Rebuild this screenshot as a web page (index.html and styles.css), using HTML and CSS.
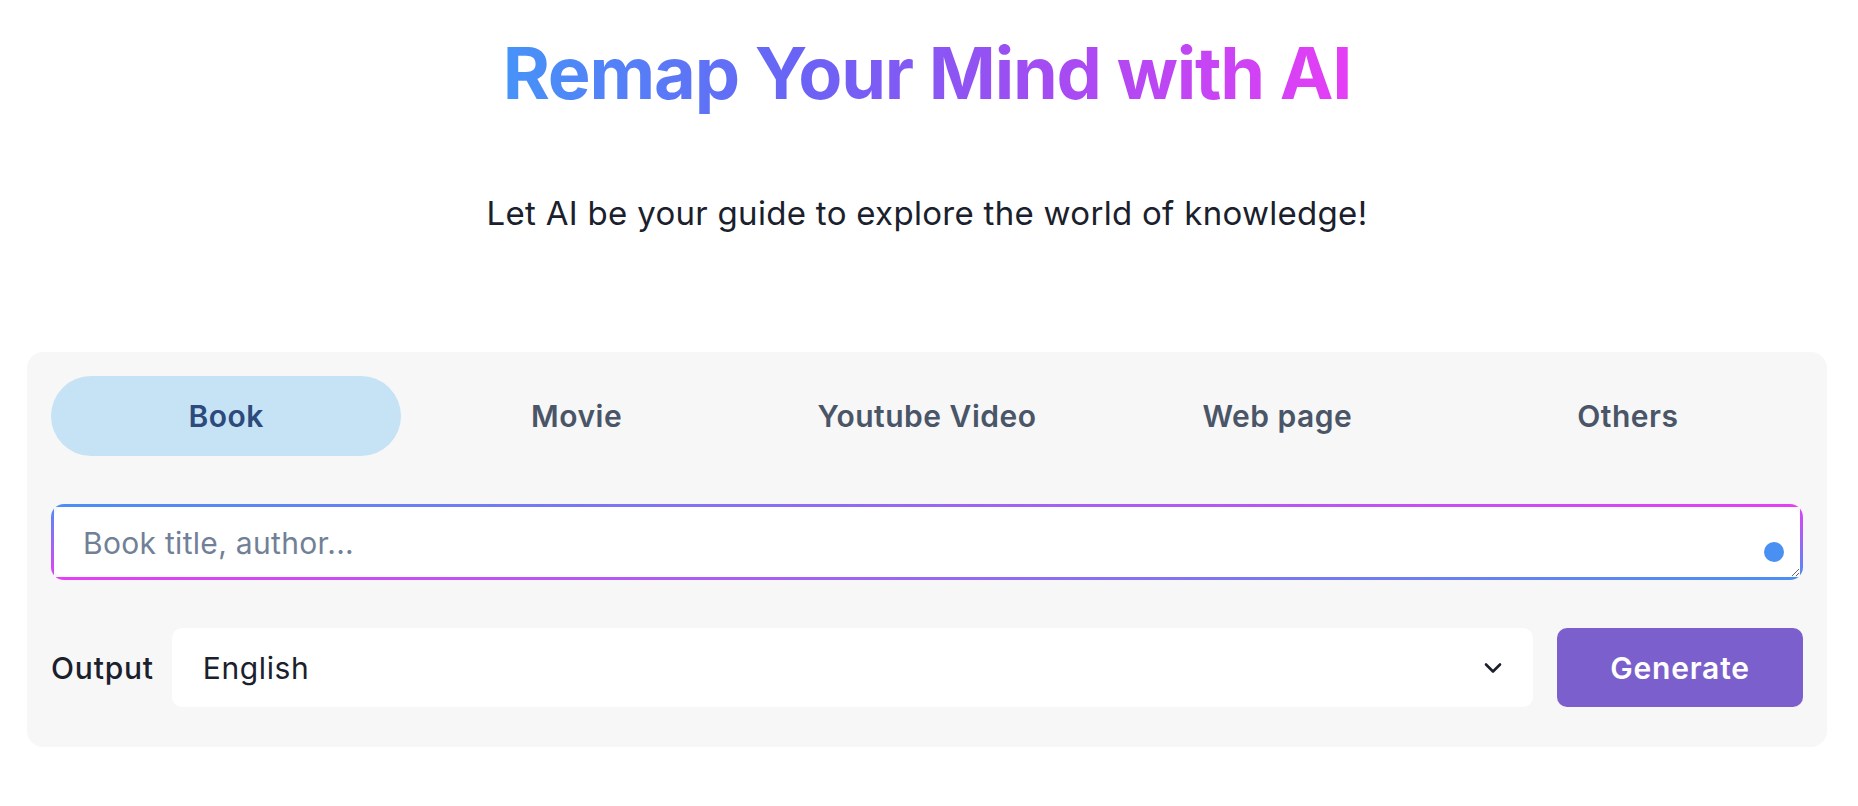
FILE: index.html
```html
<!DOCTYPE html>
<html lang="en">
<head>
<meta charset="utf-8">
<title>Remap Your Mind with AI</title>
<link rel="stylesheet" href="styles.css">
</head>
<body>
<main class="page">
  <header class="hero">
    <h1 class="title">Remap Your Mind with AI</h1>
    <p class="subtitle">Let AI be your guide to explore the world of knowledge!</p>
  </header>
  <section class="card">
    <nav class="tabs">
      <button class="tab active" type="button">Book</button>
      <button class="tab" type="button">Movie</button>
      <button class="tab" type="button">Youtube Video</button>
      <button class="tab" type="button">Web page</button>
      <button class="tab" type="button">Others</button>
    </nav>
    <div class="input-wrap">
      <textarea class="query" placeholder="Book title, author..."></textarea>
      <span class="dot"></span>
    </div>
    <div class="output-row">
      <label class="output-label" for="lang">Output</label>
      <div class="select-wrap">
        <select id="lang" class="select">
          <option>English</option>
        </select>
        <svg class="chevron" width="20" height="12" viewBox="0 0 20 12" aria-hidden="true"><path d="M3 2.5 L10 9.5 L17 2.5" fill="none" stroke="#1a202c" stroke-width="2.6" stroke-linecap="round" stroke-linejoin="round"/></svg>
      </div>
      <button class="generate" type="button">Generate</button>
    </div>
  </section>
</main>
</body>
</html>
```
FILE: styles.css
```css
* { box-sizing: border-box; }
html, body { margin: 0; padding: 0; background: #ffffff; }
body { font-family: Inter, "Noto Sans", "Liberation Sans", sans-serif; color: #1a202c; }

.page { padding: 30px 31px 0 27px; }

.hero { text-align: center; }
.title {
  margin: 0;
  font-size: 72px;
  line-height: 86px;
  font-weight: 700;
  letter-spacing: -1.2px;
  display: inline-block;
  background: linear-gradient(to right, #4693f8 0%, #6a63f5 35%, #a54bf2 65%, #e63ef6 100%);
  -webkit-background-clip: text;
  background-clip: text;
  color: transparent;
}
.subtitle {
  margin: 77px 0 0;
  font-size: 33px;
  line-height: 40px;
  font-weight: 400;
  letter-spacing: 0.3px;
  color: #1a202c;
}

.card {
  margin-top: 119px;
  background: #f7f7f7;
  border-radius: 16px;
  padding: 24px 24px 40px;
}

.tabs {
  display: grid;
  grid-template-columns: repeat(5, 1fr);
}
.tab {
  height: 80px;
  border: 0;
  border-radius: 40px;
  background: transparent;
  font-family: inherit;
  font-size: 30px;
  font-weight: 600;
  letter-spacing: 0.5px;
  color: #4a5568;
  cursor: pointer;
}
.tab.active { background: #c6e2f5; color: #2c4a7c; }

.input-wrap { position: relative; margin-top: 48px; }
.query {
  display: block;
  width: 100%;
  height: 76px;
  resize: vertical;
  border: 3px solid transparent;
  border-radius: 13px;
  padding: 18px 29px;
  font-family: inherit;
  font-size: 30px;
  line-height: 36px;
  letter-spacing: 0.3px;
  color: #1a202c;
  outline: none;
  overflow: hidden;
  background:
    linear-gradient(#ffffff, #ffffff) padding-box,
    linear-gradient(to right, #4a8ff6, #e63ef6) top / 100% 3px no-repeat border-box,
    linear-gradient(to left, #4a8ff6, #e63ef6) bottom / 100% 3px no-repeat border-box,
    linear-gradient(to bottom, #4a8ff6, #e63ef6) left / 3px 100% no-repeat border-box,
    linear-gradient(to top, #4a8ff6, #e63ef6) right / 3px 100% no-repeat border-box;
}
.query::placeholder { color: #718096; }
.dot {
  position: absolute;
  right: 19px;
  top: 38px;
  width: 20px;
  height: 20px;
  border-radius: 50%;
  background: #4a90f2;
}

.output-row {
  margin-top: 48px;
  display: flex;
  align-items: center;
  gap: 24px;
}
.output-label {
  font-size: 30px;
  font-weight: 500;
  letter-spacing: 0.8px;
  color: #1a202c;
  margin-right: -6px;
}
.select-wrap { position: relative; flex: 1; }
.select {
  display: block;
  width: 100%;
  height: 79px;
  -webkit-appearance: none;
  appearance: none;
  border: 0;
  border-radius: 10px;
  background: #ffffff;
  padding: 0 60px 0 31px;
  font-family: inherit;
  font-size: 30px;
  letter-spacing: 0.6px;
  color: #1a202c;
}
.chevron {
  position: absolute;
  right: 30px;
  top: 34px;
  pointer-events: none;
}
.generate {
  width: 246px;
  height: 79px;
  border: 0;
  border-radius: 10px;
  background: #7b5fcc;
  color: #ffffff;
  font-family: inherit;
  font-size: 30px;
  font-weight: 600;
  letter-spacing: 0.8px;
  cursor: pointer;
}
```
